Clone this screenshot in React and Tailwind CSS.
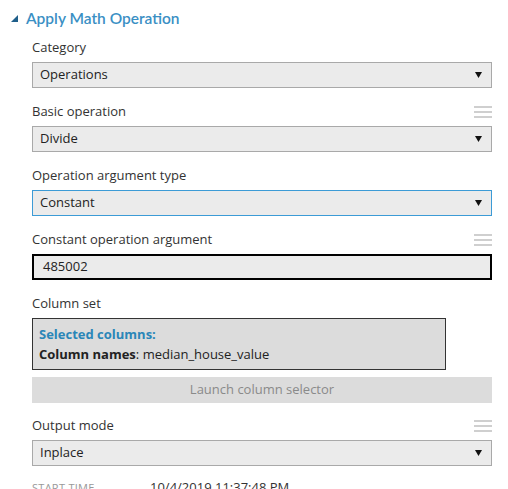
import React from 'react';

const font = { fontFamily: '"Open Sans", "Noto Sans", sans-serif' };

const Handle = () => (
  <div className="flex flex-col gap-[2.5px] w-[18px]">
    <span className="block h-[2.5px] bg-[#cfcfcf]"></span>
    <span className="block h-[2.5px] bg-[#cfcfcf]"></span>
    <span className="block h-[2.5px] bg-[#cfcfcf]"></span>
  </div>
);

const Label = ({ text, handle }) => (
  <div className="h-5 flex items-center justify-between mb-1">
    <span className="text-[13px] text-[#333]">{text}</span>
    {handle && <Handle />}
  </div>
);

const Select = ({ value, active }) => (
  <div
    className={`h-[26px] bg-[#ebebeb] border flex items-center justify-between pl-[7px] pr-[9px] text-[13px] text-[#222] ${
      active ? 'border-[#3c9bd6]' : 'border-[#a9a9a9]'
    }`}
  >
    <span>{value}</span>
    <svg width="7" height="6" viewBox="0 0 7 6">
      <path d="M0 0 H7 L3.5 6 Z" fill="#111" />
    </svg>
  </div>
);

const Field = ({ label, value, handle, active }) => (
  <div className="mb-[14px]">
    <Label text={label} handle={handle} />
    <Select value={value} active={active} />
  </div>
);

export default function App() {
  return (
    <div className="w-[508px] h-[489px] bg-white overflow-hidden" style={font}>
      <div className="flex items-center gap-2 pl-[11px] pt-[7px] h-[30px]">
        <svg width="7" height="7" viewBox="0 0 7 7">
          <path d="M7 0 V7 H0 Z" fill="#1f5f8a" />
        </svg>
        <span className="text-[15.5px] text-[#3a8fc4] font-semibold" style={{ fontFamily: 'Lato, "Open Sans", sans-serif' }}>
          Apply Math Operation
        </span>
      </div>

      <div className="pl-[32px] w-[492px] pt-[8px]">
        <Field label="Category" value="Operations" />
        <Field label="Basic operation" value="Divide" handle />
        <Field label="Operation argument type" value="Constant" active />

        <div className="mb-[14px]">
          <Label text="Constant operation argument" handle />
          <div className="h-[26px] bg-[#ebebeb] border-2 border-black flex items-center pl-[9px] text-[13px] text-[#222]">
            485002
          </div>
        </div>

        <div className="mb-[13px]">
          <Label text="Column set" />
          <div className="w-[414px] h-[52px] bg-[#dcdcdc] border border-[#333] px-[6px] pt-[5px] text-[13px] leading-[20px]">
            <div className="font-bold text-[#2a86b8]">Selected columns:</div>
            <div className="text-[#222]">
              <span className="font-bold">Column names</span>: median_house_value
            </div>
          </div>
          <div className="mt-[7px] h-[26px] bg-[#dcdcdc] flex items-center justify-center text-[13px] text-[#8a8a8a]">
            Launch column selector
          </div>
        </div>

        <Field label="Output mode" value="Inplace" handle />

        <div className="flex items-center -mt-[2px] text-[13px]">
          <span className="w-[118px] text-[11px] tracking-wide text-[#999]">START TIME</span>
          <span className="text-[#333]">10/4/2019 11:37:48 PM</span>
        </div>
      </div>
    </div>
  );
}
